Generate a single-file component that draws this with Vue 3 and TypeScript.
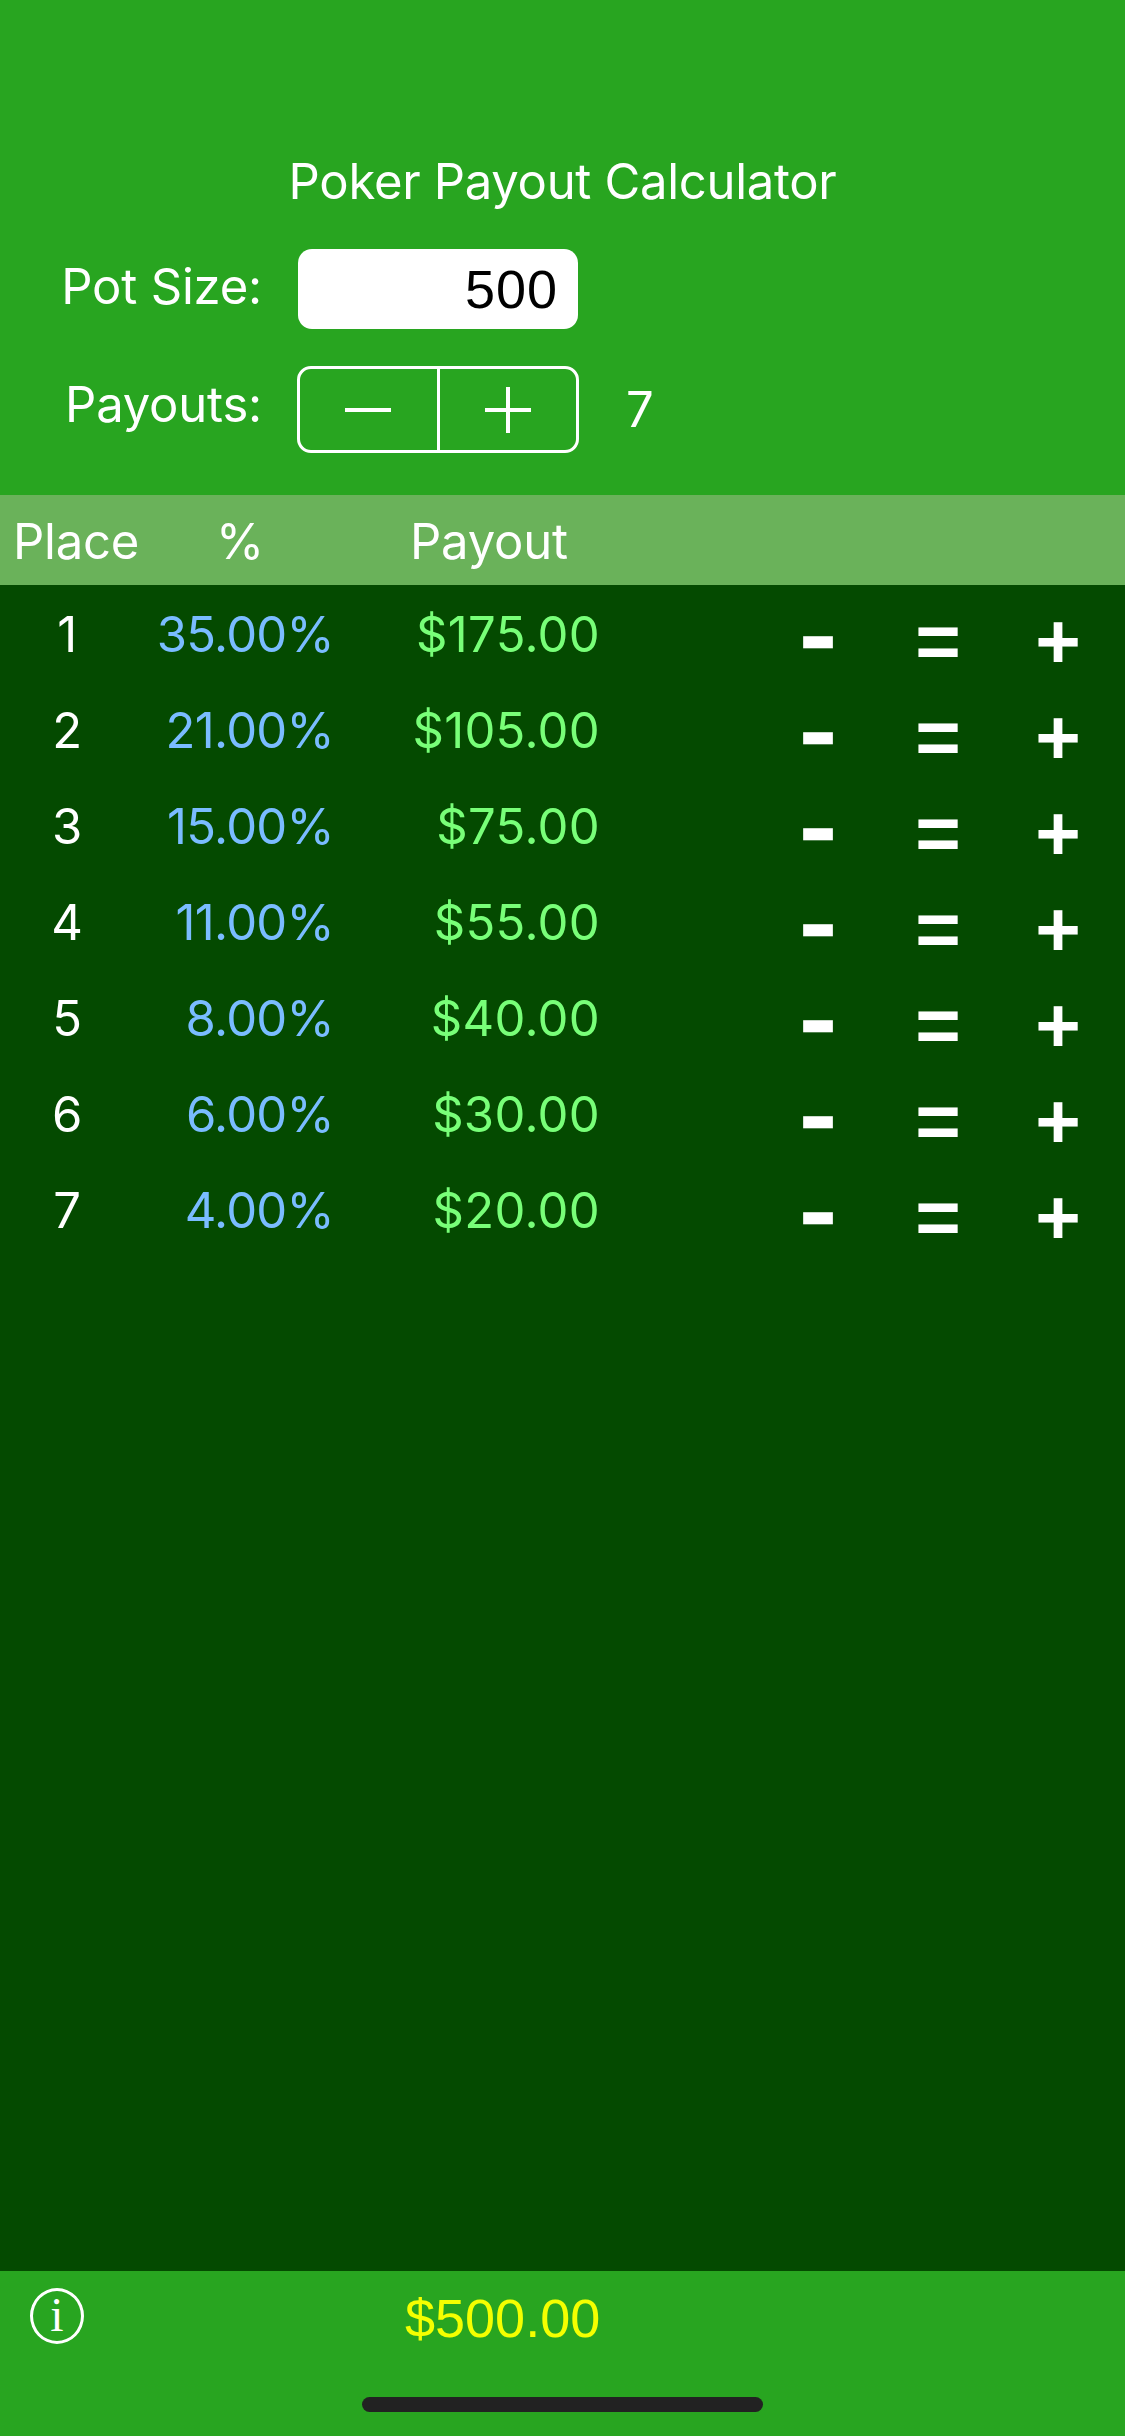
<script setup lang="ts">
import { computed, ref } from 'vue';

const potSize = ref(500);
const percents = [35, 21, 15, 11, 8, 6, 4];

const rows = computed(() =>
  percents.map((pct, i) => ({
    place: i + 1,
    percent: pct.toFixed(2) + '%',
    payout: '$' + ((potSize.value * pct) / 100).toFixed(2),
  }))
);

const total = computed(() => '$' + potSize.value.toFixed(2));
</script>

<template>
  <div class="screen">
    <header class="top">
      <h1 class="title">Poker Payout Calculator</h1>
      <div class="form-row pot-row">
        <label class="form-label">Pot Size:</label>
        <div class="pot-field">{{ potSize }}</div>
      </div>
      <div class="form-row count-row">
        <label class="form-label">Payouts:</label>
        <div class="stepper">
          <button class="step" aria-label="Decrement"><span class="step-minus"></span></button>
          <button class="step" aria-label="Increment"><span class="step-plus"></span></button>
        </div>
        <span class="count">{{ rows.length }}</span>
      </div>
    </header>

    <div class="table-head">
      <span class="th-place">Place</span>
      <span class="th-pct">%</span>
      <span class="th-payout">Payout</span>
    </div>

    <main class="table">
      <div v-for="row in rows" :key="row.place" class="row">
        <span class="place">{{ row.place }}</span>
        <span class="pct">{{ row.percent }}</span>
        <span class="payout">{{ row.payout }}</span>
        <span></span>
        <button class="adjust minus">-</button>
        <button class="adjust same">=</button>
        <button class="adjust plus">+</button>
      </div>
    </main>

    <footer class="bottom">
      <div class="bottom-row">
        <div class="info"><span>i</span></div>
        <span class="total">{{ total }}</span>
      </div>
      <div class="home-bar"></div>
    </footer>
  </div>
</template>

<style>
html,
body {
  margin: 0;
  background: #28a520;
}
</style>

<style scoped>
.screen {
  width: 1125px;
  height: 2436px;
  display: flex;
  flex-direction: column;
  font-family: Inter, "Liberation Sans", sans-serif;
  font-weight: 375;
  font-size: 49px;
  letter-spacing: -0.2px;
  color: #fff;
  overflow: hidden;
}

.top {
  height: 495px;
  box-sizing: border-box;
  padding-top: 153px;
  background: #28a520;
  flex: none;
}

.title {
  margin: 0;
  font: inherit;
  letter-spacing: -0.3px;
  line-height: 58px;
  text-align: center;
}

.form-row {
  display: flex;
  align-items: center;
}

.pot-row {
  margin-top: 38px;
  height: 80px;
}

.count-row {
  margin-top: 37px;
  height: 87px;
}

.form-label {
  width: 262px;
  margin-right: 35px;
  text-align: right;
}

.pot-row .form-label {
  margin-right: 36px;
  margin-bottom: 5px;
}

.count-row .form-label {
  margin-bottom: 10px;
}

.pot-field {
  width: 280px;
  height: 80px;
  box-sizing: border-box;
  padding-right: 20px;
  border-radius: 14px;
  background: #fff;
  color: #000;
  font-family: "Liberation Sans", sans-serif;
  font-weight: 400;
  font-size: 54px;
  letter-spacing: 1px;
  line-height: 80px;
  text-align: right;
}

.stepper {
  width: 282px;
  height: 87px;
  box-sizing: border-box;
  display: flex;
  border: 3px solid #fff;
  border-radius: 14px;
}

.step {
  flex: 1;
  padding: 0;
  border: 0;
  background: none;
  display: flex;
  align-items: center;
  justify-content: center;
}

.step + .step {
  border-left: 3px solid #fff;
}

.step-minus,
.step-plus {
  position: relative;
  display: block;
  width: 46px;
  height: 4px;
  background: #fff;
}

.step-plus::after {
  content: "";
  position: absolute;
  left: 21px;
  top: -21px;
  width: 4px;
  height: 46px;
  background: #fff;
}

.count {
  margin-left: 47px;
}

.table-head {
  height: 90px;
  flex: none;
  box-sizing: border-box;
  padding-top: 3px;
  display: grid;
  grid-template-columns: 134px 200px 266px;
  align-items: center;
  background: #6ab25a;
}

.th-place {
  padding-left: 13px;
}

.th-pct {
  padding-left: 82px;
}

.th-payout {
  padding-left: 76px;
}

.table {
  flex: 1;
  padding-top: 1px;
  background: #044a00;
}

.row {
  height: 96px;
  display: grid;
  grid-template-columns: 134px 200px 266px 158px 120px 120px 120px;
  align-items: center;
}

.place {
  text-align: center;
}

.pct {
  text-align: right;
  letter-spacing: -0.7px;
  color: #7abcff;
}

.payout {
  text-align: right;
  letter-spacing: 0.3px;
  color: #78ff78;
}

.adjust {
  padding: 0;
  border: 0;
  background: none;
  color: #fff;
  font-family: "Liberation Sans", sans-serif;
  font-weight: 700;
  letter-spacing: 0;
  text-align: center;
}

.minus {
  padding-top: 4px;
  font-size: 80px;
  line-height: 92px;
  transform: scaleX(1.3);
  -webkit-text-stroke: 2.5px #fff;
}

.same,
.plus {
  padding-top: 14px;
  font-size: 78px;
  line-height: 82px;
}

.bottom {
  height: 165px;
  flex: none;
  box-sizing: border-box;
  padding-top: 15px;
  background: #28a520;
}

.bottom-row {
  display: flex;
  align-items: center;
  padding-left: 30px;
  height: 60px;
}

.info {
  width: 54px;
  height: 56px;
  box-sizing: border-box;
  border: 3px solid #fff;
  border-radius: 50%;
  font-family: "Liberation Serif", serif;
  font-weight: 400;
  font-size: 48px;
  letter-spacing: 0;
  line-height: 48px;
  text-align: center;
}

.total {
  margin-left: 321px;
  padding-top: 3px;
  color: #f4ff00;
  font-family: "Liberation Sans", sans-serif;
  font-weight: 400;
  font-size: 54px;
  letter-spacing: 0;
}

.home-bar {
  width: 401px;
  height: 15px;
  margin: 51px auto 0;
  border-radius: 8px;
  background: #222;
}
</style>
